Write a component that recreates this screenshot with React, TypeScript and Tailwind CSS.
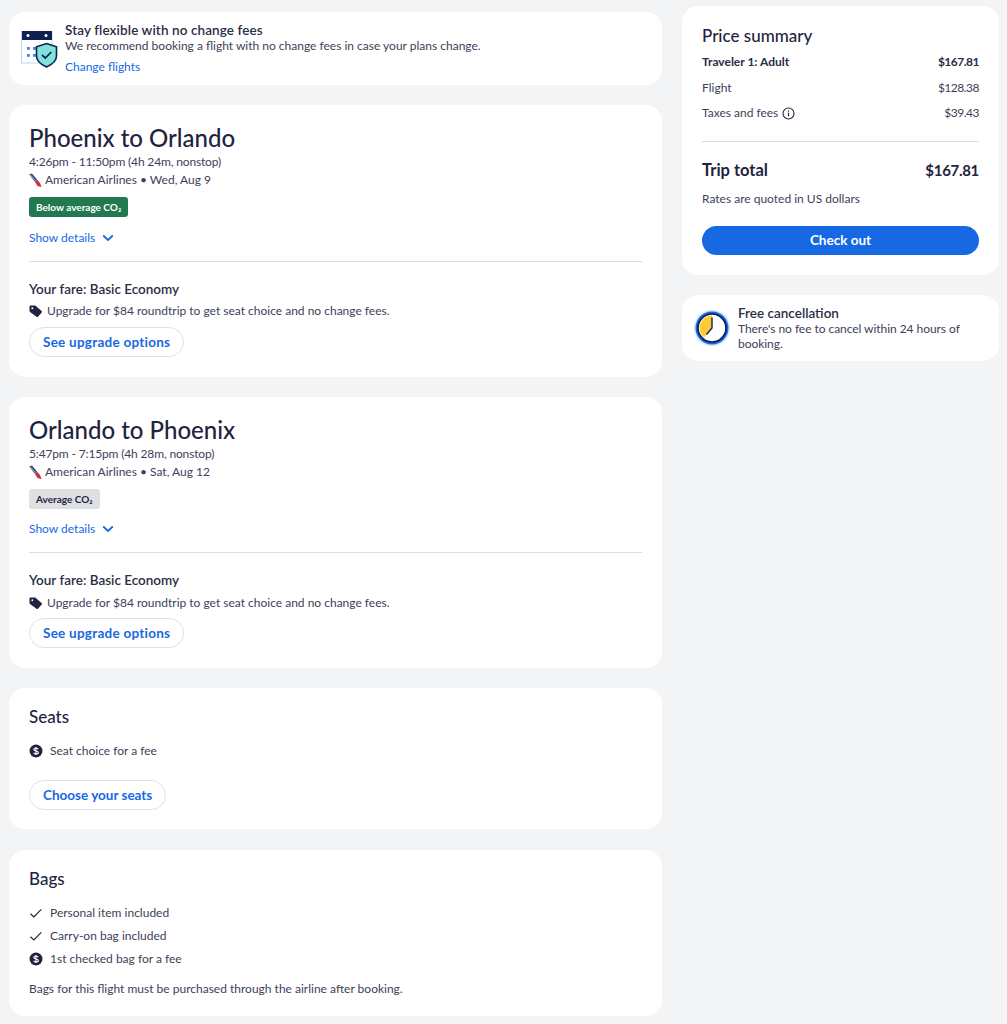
import React from "react";

const font = { fontFamily: '"Lato", "Noto Sans", sans-serif' };

function Dollar() {
  return (
    <svg width="14" height="14" viewBox="0 0 14 14" className="shrink-0">
      <circle cx="7" cy="7" r="6.5" fill="#1f2340" />
      <path d="M9.2 5.2C8.9 4.4 8 4 7 4c-1.2 0-2.2.6-2.2 1.5 0 2 4.5 1 4.5 3 0 .9-1 1.500-2.300 1.500-1.100 0-2-.5-2.300-1.300M7 3v8" stroke="#fff" strokeWidth="1.100" fill="none" />
    </svg>
  );
}

function Check() {
  return (
    <svg width="14" height="14" viewBox="0 0 14 14" className="shrink-0">
      <path d="M1.500 7.800l3.400 3.200 7.400-7.600" stroke="#1f2340" strokeWidth="1.200" fill="none" />
    </svg>
  );
}

function Tail() {
  return (
    <svg width="13" height="14" viewBox="0 0 13 14" className="shrink-0">
      <path d="M0 1.200L3 .5l5 6-2 2.500z" fill="#34507f" />
      <path d="M0.500 1.200l6 6.500" stroke="#b9c4d6" strokeWidth="0.800" />
      <path d="M6 9l2-2.500 3 3.500 1.500 4L8.500 13z" fill="#c8323c" />
    </svg>
  );
}

function Tag() {
  return (
    <svg width="14" height="13" viewBox="0 0 14 13" className="shrink-0">
      <path d="M0.500 1.600c0-.6.500-1.100 1.100-1.100h4.200c.4 0 .7.100 1 .4l5.800 5.100c.5.400.5 1.100.1 1.500l-3.700 4.200c-.4.500-1.100.5-1.500.1L1 6.900c-.3-.3-.5-.6-.5-1z" fill="#1f2340" />
      <circle cx="3.300" cy="3.300" r="1" fill="#fff" />
    </svg>
  );
}

function Chevron() {
  return (
    <svg width="12" height="8" viewBox="0 0 12 8" className="shrink-0">
      <path d="M1.200 1.500L6 6l4.800-4.500" stroke="#1668e3" strokeWidth="1.800" fill="none" />
    </svg>
  );
}

function CalendarShield() {
  return (
    <svg width="38" height="40" viewBox="0 0 38 40" className="shrink-0">
      <rect x="1.500" y="3.500" width="30.500" height="31.500" fill="#fff" stroke="#bcd6fb" strokeWidth="1" />
      <rect x="2" y="3" width="30" height="9" fill="#10204f" />
      <circle cx="8" cy="7.500" r="1.500" fill="#fff" />
      <circle cx="26" cy="7.500" r="1.500" fill="#fff" />
      <rect x="7" y="19" width="2.800" height="2.800" fill="#3b82f6" />
      <rect x="13" y="19" width="2.800" height="2.800" fill="#3b82f6" />
      <rect x="7" y="26" width="2.800" height="2.800" fill="#3b82f6" />
      <rect x="13" y="26" width="2.800" height="2.800" fill="#3b82f6" />
      <path d="M26.500 15.500l10 3.300v9.200c0 4.800-4 8.300-10 11-6-2.700-10-6.200-10-11v-9.200z" fill="#7fe3dc" stroke="#10204f" strokeWidth="1.600" />
      <path d="M22 27l3.300 3 6-6" stroke="#10204f" strokeWidth="1.700" fill="none" />
    </svg>
  );
}

function Clock() {
  return (
    <svg width="36" height="36" viewBox="0 0 36 36" className="shrink-0">
      <circle cx="18" cy="18" r="18" fill="#cfe4ff" />
      <circle cx="18" cy="18" r="16.500" fill="#1668e3" />
      <circle cx="18" cy="18" r="14" fill="#fff" stroke="#10204f" strokeWidth="1.700" />
      <path d="M18 18V5.500A12.500 12.500 0 0 0 10 27.600z" fill="#fbcc33" />
      <path d="M18 7.500V18l-5.500 6.500" stroke="#10204f" strokeWidth="1.400" fill="none" />
    </svg>
  );
}

function FlightCard({ title, times, date, badge, green }: { title: string; times: string; date: string; badge: string; green: boolean }) {
  return (
    <section className="bg-white rounded-2xl px-5 pt-[19px] pb-[20px]">
      <h2 className="text-[24px] leading-[27px] font-medium text-[#1f2340]">{title}</h2>
      <p className="mt-[2px] text-[12px] leading-[18px] tracking-[-0.15px] text-[#3d4158]">{times}</p>
      <div className="flex items-center gap-[3px] text-[12px] leading-[18px] text-[#3d4158]">
        <Tail />
        <span>American Airlines • {date}</span>
      </div>
      <div className={`mt-[8px] inline-flex h-[20px] items-center rounded-[3px] px-[7px] text-[10px] font-bold ${green ? "bg-[#227950] text-white" : "bg-[#dfe0e4] text-[#1f2340]"}`}>
        {badge}
      </div>
      <div className={`${green ? "mt-[12px]" : "mt-[11px]"} flex items-center gap-[7px] text-[12px] leading-[18px] text-[#1668e3]`}>
        <span>Show details</span>
        <Chevron />
      </div>
      <div className="mt-[14px] border-t border-[#dcdde1]" />
      <p className="mt-[18px] text-[13.5px] leading-[18px] font-semibold text-[#2a2d45]">Your fare: Basic Economy</p>
      <div className={`${green ? "mt-[4px]" : "mt-[5px]"} flex items-center gap-[4px] text-[12px] leading-[18px] text-[#3d4158]`}>
        <Tag />
        <span>Upgrade for $84 roundtrip to get seat choice and no change fees.</span>
      </div>
      <button className={`${green ? "mt-[7px]" : "mt-[6px]"} flex h-[30px] items-center rounded-full border border-[#dfe0e4] px-[13px] text-[13.500px] tracking-[0.25px] font-bold text-[#1668e3]`}>
        See upgrade options
      </button>
    </section>
  );
}

function Row({ icon, text }: { icon: React.ReactNode; text: string }) {
  return (
    <div className="flex items-center gap-[7px] text-[12px] leading-[18px] text-[#3d4158]">
      {icon}
      <span>{text}</span>
    </div>
  );
}

export default function App() {
  return (
    <div style={font} className="min-h-[1024px] bg-[#f3f4f6] flex gap-5 pl-[9px] pr-[8px] pt-[6px]">
      <main className="w-[653px] flex flex-col gap-5 pt-[6px]">
        <section className="flex gap-[7px] bg-white rounded-2xl h-[73px] pl-[11px] pt-[10px]">
          <div className="pt-[6px]"><CalendarShield /></div>
          <div>
            <p className="text-[13.5px] leading-[16px] tracking-[0.1px] font-semibold text-[#2a2d45]">Stay flexible with no change fees</p>
            <p className="text-[12px] leading-[16px] text-[#3d4158]">We recommend booking a flight with no change fees in case your plans change.</p>
            <p className="mt-[5px] text-[12px] leading-[16px] text-[#1668e3]">Change flights</p>
          </div>
        </section>

        <FlightCard title="Phoenix to Orlando" times="4:26pm - 11:50pm (4h 24m, nonstop)" date="Wed, Aug 9" badge="Below average CO₂" green />
        <FlightCard title="Orlando to Phoenix" times="5:47pm - 7:15pm (4h 28m, nonstop)" date="Sat, Aug 12" badge="Average CO₂" green={false} />

        <section className="bg-white rounded-2xl px-5 pt-[19px] h-[141px] mb-[1px]">
          <h3 className="text-[17px] leading-[20px] font-medium text-[#1f2340]">Seats</h3>
          <div className="mt-[15px]"><Row icon={<Dollar />} text="Seat choice for a fee" /></div>
          <button className="mt-[20px] flex h-[30px] items-center rounded-full border border-[#dfe0e4] px-[13px] text-[13.500px] font-bold text-[#1668e3]">
            Choose your seats
          </button>
        </section>

        <section className="bg-white rounded-2xl px-5 pt-[19px] h-[166px]">
          <h3 className="text-[17px] leading-[20px] font-medium text-[#1f2340]">Bags</h3>
          <div className="mt-[15px] flex flex-col gap-[5px]">
            <Row icon={<Check />} text="Personal item included" />
            <Row icon={<Check />} text="Carry-on bag included" />
            <Row icon={<Dollar />} text="1st checked bag for a fee" />
          </div>
          <p className="mt-[12px] text-[12px] leading-[18px] text-[#3d4158]">Bags for this flight must be purchased through the airline after booking.</p>
        </section>
      </main>

      <aside className="w-[317px] flex flex-col gap-5">
        <section className="bg-white rounded-2xl h-[269px] pl-5 pr-[20px] pt-[20px]">
          <h3 className="text-[17px] leading-[20px] font-medium text-[#1f2340]">Price summary</h3>
          <div className="mt-[7px] flex justify-between text-[12px] leading-[18px] font-bold text-[#2a2d45]"><span>Traveler 1: Adult</span><span className="tracking-[-0.5px]">$167.81</span></div>
          <div className="mt-[8px] flex justify-between text-[12px] leading-[18px] text-[#3d4158]"><span>Flight</span><span className="tracking-[-0.5px]">$128.38</span></div>
          <div className="mt-[7px] flex justify-between text-[12px] leading-[18px] text-[#3d4158]">
            <span className="flex items-center gap-[4px]">Taxes and fees
              <svg width="13" height="13" viewBox="0 0 13 13"><circle cx="6.500" cy="6.500" r="5.500" stroke="#1f2340" strokeWidth="1.100" fill="none" /><path d="M6.500 5.800v3.500M6.500 3.500v1.200" stroke="#1f2340" strokeWidth="1.200" /></svg>
            </span>
            <span className="tracking-[-0.5px]">$39.43</span>
          </div>
          <div className="mt-[19px] border-t border-[#dcdde1]" />
          <div className="mt-[18px] flex justify-between text-[16.500px] leading-[20px] font-bold text-[#1f2340]"><span>Trip total</span><span className="text-[15px] tracking-[-0.3px]">$167.81</span></div>
          <p className="mt-[10px] text-[12px] leading-[18px] text-[#3d4158]">Rates are quoted in US dollars</p>
          <button className="mt-[18px] w-full h-[29px] rounded-full bg-[#1668e3] text-white text-[13.500px] font-bold">Check out</button>
        </section>

        <section className="flex gap-[8px] bg-white rounded-2xl h-[66px] pl-[12px] pt-[10px]">
          <div className="pt-[5px]"><Clock /></div>
          <div>
            <p className="text-[13.500px] leading-[16px] font-semibold text-[#2a2d45]">Free cancellation</p>
            <p className="w-[240px] text-[12px] leading-[15px] tracking-[-0.05px] text-[#3d4158]">There's no fee to cancel within 24 hours of booking.</p>
          </div>
        </section>
      </aside>
    </div>
  );
}
